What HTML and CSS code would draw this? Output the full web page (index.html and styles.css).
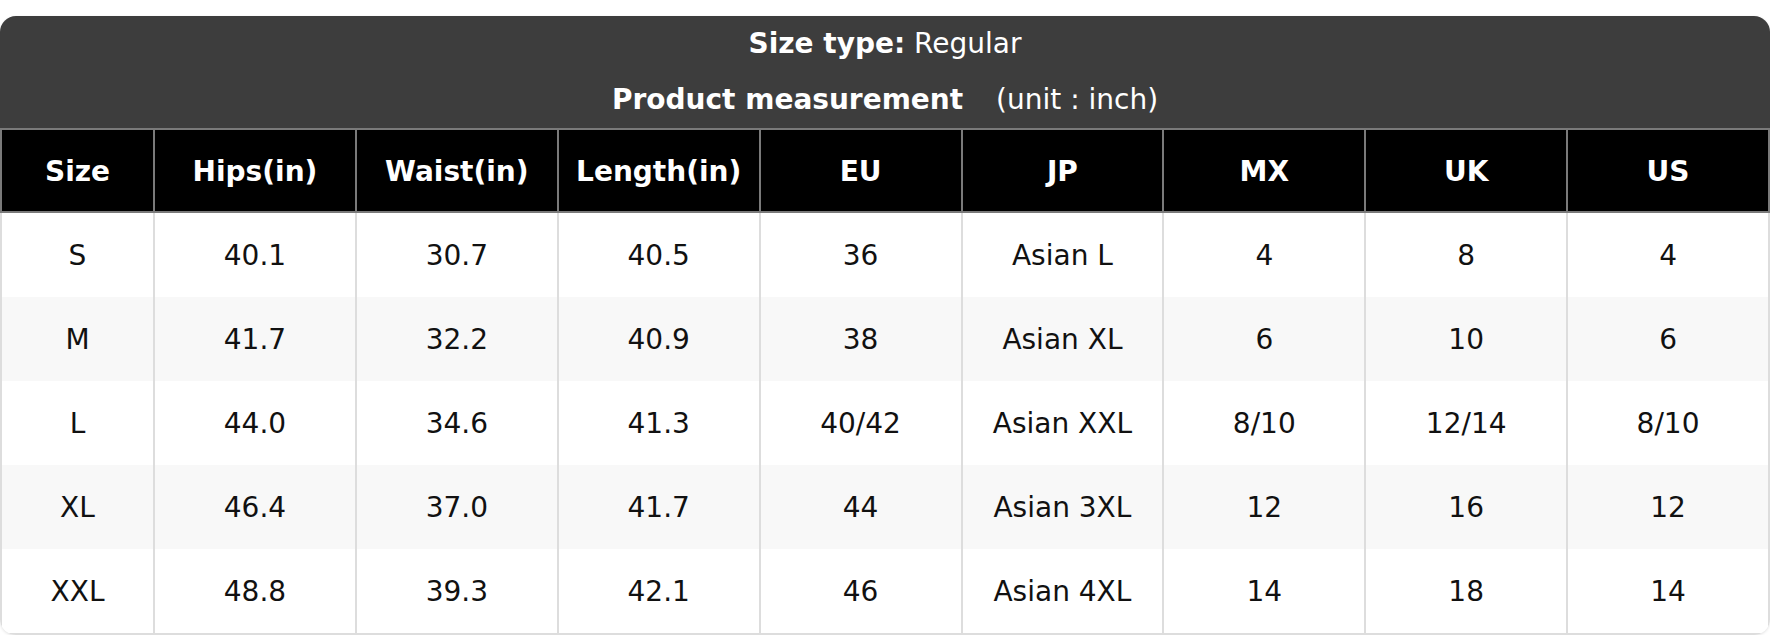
FILE: index.html
```html
<!DOCTYPE html>
<html lang="en">
<head>
<meta charset="utf-8">
<title>Size chart</title>
<link rel="stylesheet" href="styles.css">
</head>
<body>
<div class="card">
  <div class="title">
    <div class="title-line"><strong>Size type:</strong> Regular</div>
    <div class="title-line"><strong>Product measurement</strong> <span class="unit">(unit : inch)</span></div>
  </div>
  <table class="chart">
    <colgroup>
      <col class="col-size">
      <col><col><col><col><col><col><col><col>
    </colgroup>
    <thead>
      <tr>
        <th>Size</th><th>Hips(in)</th><th>Waist(in)</th><th>Length(in)</th><th>EU</th><th>JP</th><th>MX</th><th>UK</th><th>US</th>
      </tr>
    </thead>
    <tbody>
      <tr><td>S</td><td>40.1</td><td>30.7</td><td>40.5</td><td>36</td><td>Asian L</td><td>4</td><td>8</td><td>4</td></tr>
      <tr><td>M</td><td>41.7</td><td>32.2</td><td>40.9</td><td>38</td><td>Asian XL</td><td>6</td><td>10</td><td>6</td></tr>
      <tr><td>L</td><td>44.0</td><td>34.6</td><td>41.3</td><td>40/42</td><td>Asian XXL</td><td>8/10</td><td>12/14</td><td>8/10</td></tr>
      <tr><td>XL</td><td>46.4</td><td>37.0</td><td>41.7</td><td>44</td><td>Asian 3XL</td><td>12</td><td>16</td><td>12</td></tr>
      <tr><td>XXL</td><td>48.8</td><td>39.3</td><td>42.1</td><td>46</td><td>Asian 4XL</td><td>14</td><td>18</td><td>14</td></tr>
    </tbody>
  </table>
</div>
</body>
</html>
```

FILE: styles.css
```css
html, body {
  margin: 0;
  background: #ffffff;
}
body {
  padding-top: 16px;
  font-family: "DejaVu Sans", Verdana, sans-serif;
  font-size: 28px;
  color: #111111;
}
.card {
  border-radius: 16px;
  overflow: hidden;
  box-shadow: 0 1px 3px rgba(0, 0, 0, 0.12);
}
.title {
  background: #3d3d3d;
  color: #ffffff;
  text-align: center;
}
.title-line {
  line-height: 56px;
}
.title-line strong {
  font-weight: bold;
}
.unit {
  margin-left: 24px;
}
.chart {
  width: 100%;
  border-collapse: collapse;
  table-layout: fixed;
}
.col-size {
  width: 153px;
}
.chart th,
.chart td {
  text-align: center;
  padding: 2px 0 0;
  line-height: 34px;
}
.chart th {
  background: #000000;
  color: #ffffff;
  font-weight: bold;
  border: 2px solid #7a7a7a;
  height: 79px;
}
.chart td {
  border: 2px solid #dddddd;
  border-top: none;
  border-bottom: none;
  height: 82px;
}
.chart tbody tr:nth-child(even) td {
  background: #f8f8f8;
}
.chart tbody tr:last-child td {
  border-bottom: 2px solid #dddddd;
}
```
